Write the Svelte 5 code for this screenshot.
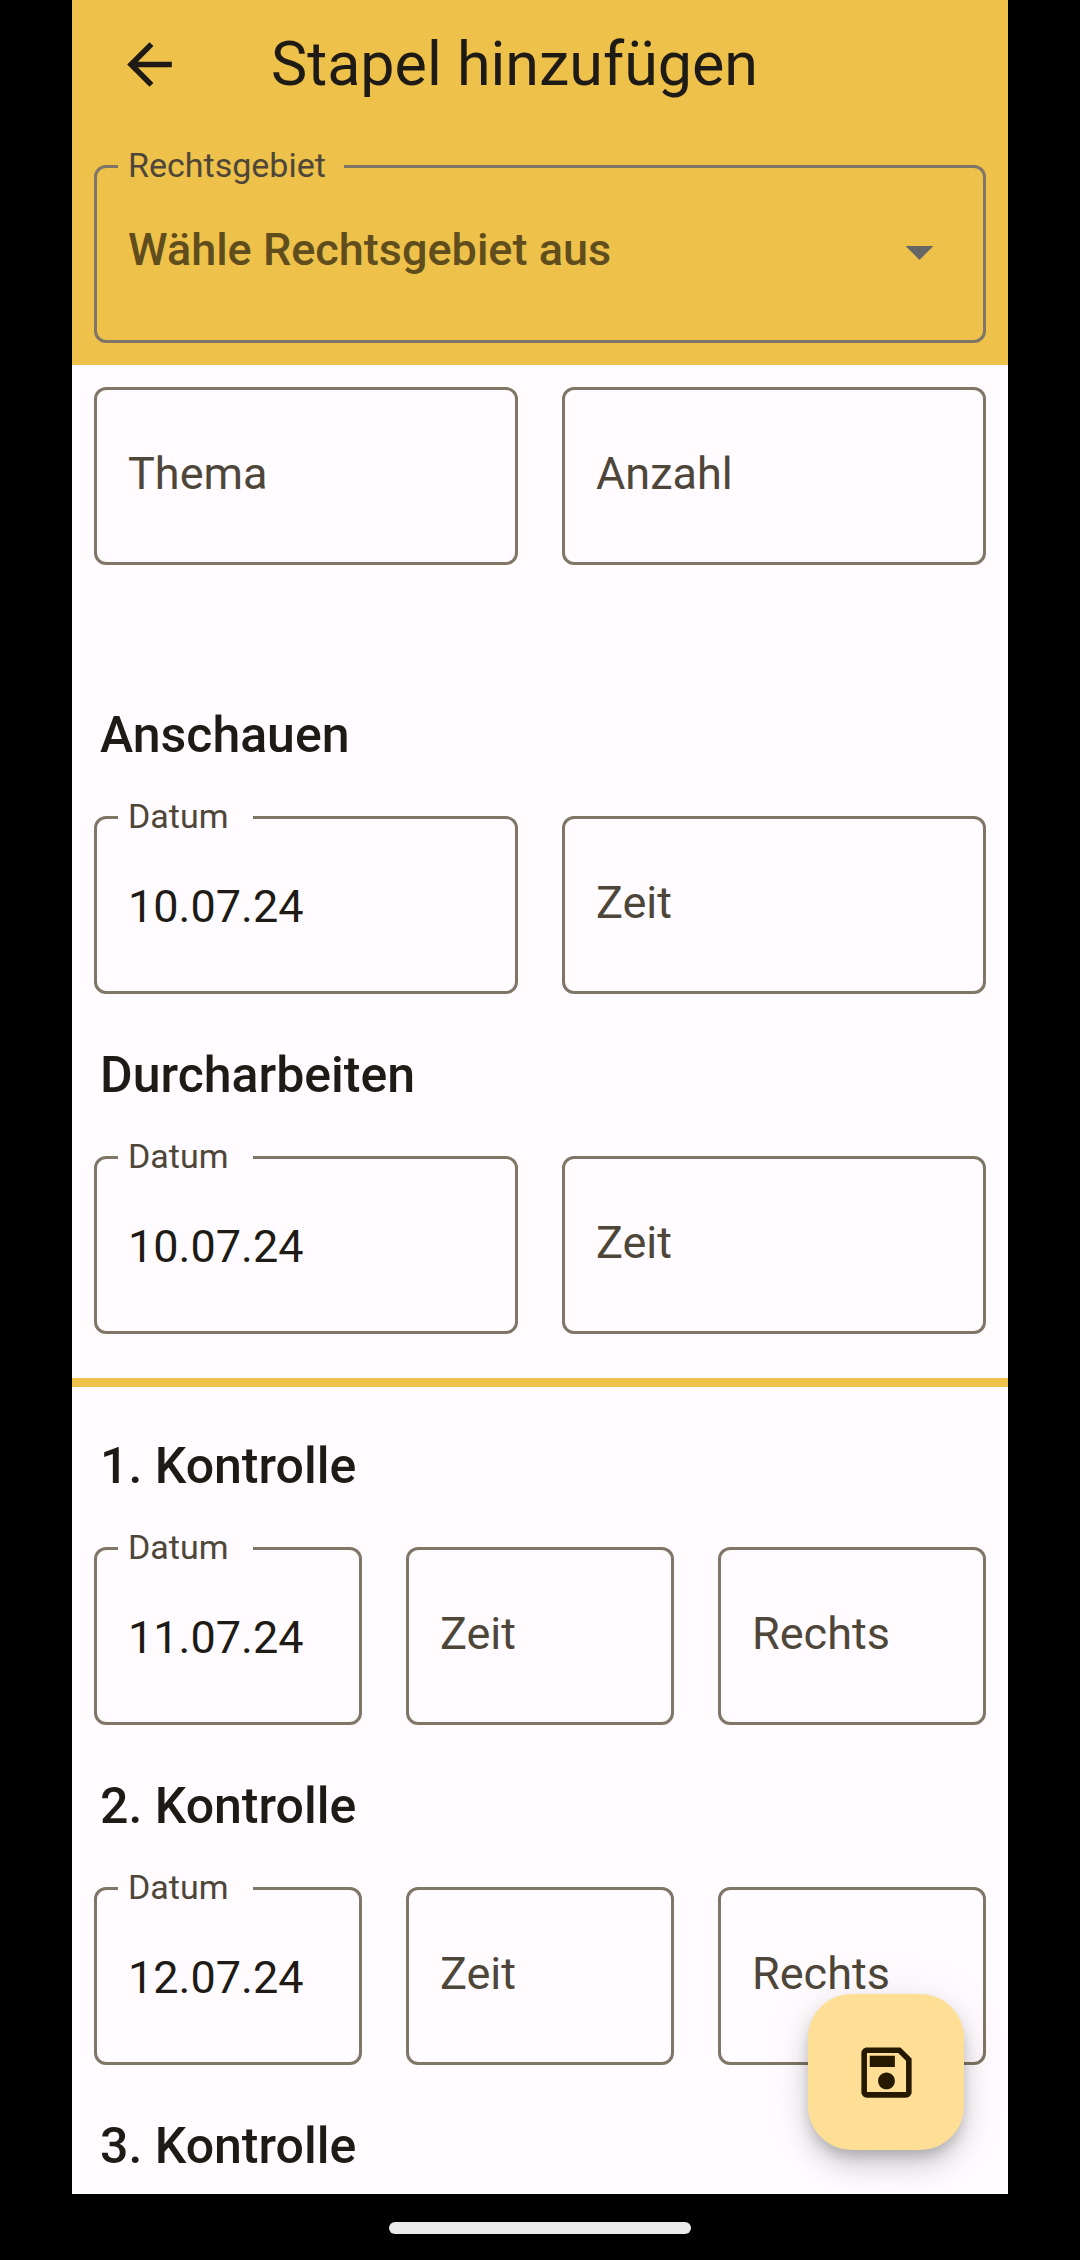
<script>
  const areas = ['Zivilrecht', 'Strafrecht', 'Öffentliches Recht'];

  let area = $state('');

  const topic = [
    { id: 'thema', label: 'Thema', value: '' },
    { id: 'anzahl', label: 'Anzahl', value: '' }
  ];

  const study = [
    {
      title: 'Anschauen',
      fields: [
        { id: 'anschauen-datum', label: 'Datum', value: '10.07.24' },
        { id: 'anschauen-zeit', label: 'Zeit', value: '' }
      ]
    },
    {
      title: 'Durcharbeiten',
      fields: [
        { id: 'durcharbeiten-datum', label: 'Datum', value: '10.07.24' },
        { id: 'durcharbeiten-zeit', label: 'Zeit', value: '' }
      ]
    }
  ];

  const checks = [
    {
      title: '1. Kontrolle',
      fields: [
        { id: 'k1-datum', label: 'Datum', value: '11.07.24' },
        { id: 'k1-zeit', label: 'Zeit', value: '' },
        { id: 'k1-rechts', label: 'Rechts', value: '' }
      ]
    },
    {
      title: '2. Kontrolle',
      fields: [
        { id: 'k2-datum', label: 'Datum', value: '12.07.24' },
        { id: 'k2-zeit', label: 'Zeit', value: '' },
        { id: 'k2-rechts', label: 'Rechts', value: '' }
      ]
    },
    { title: '3. Kontrolle', fields: [] }
  ];
</script>

{#snippet row(fields)}
  <div class="row">
    {#each fields as field (field.id)}
      <div class="field" class:filled={field.value}>
        <input id={field.id} type="text" value={field.value} />
        <label for={field.id}>{field.label}</label>
      </div>
    {/each}
  </div>
{/snippet}

{#snippet group(item)}
  <section>
    <h2>{item.title}</h2>
    {#if item.fields.length}
      {@render row(item.fields)}
    {/if}
  </section>
{/snippet}

<div class="screen">
  <header>
    <div class="bar">
      <button class="back" type="button" aria-label="Zurück">
        <svg viewBox="0 0 24 24" aria-hidden="true">
          <path d="M20 11H7.83l5.59-5.59L12 4l-8 8 8 8 1.41-1.41L7.83 13H20v-2z" />
        </svg>
      </button>
      <h1>Stapel hinzufügen</h1>
    </div>
    <div class="field filled picker">
      <select id="rechtsgebiet" bind:value={area}>
        <option value="">Wähle Rechtsgebiet aus</option>
        {#each areas as name}
          <option value={name}>{name}</option>
        {/each}
      </select>
      <label for="rechtsgebiet">Rechtsgebiet</label>
      <svg class="caret" viewBox="0 0 24 24" aria-hidden="true">
        <path d="M7 10l5 5 5-5z" />
      </svg>
    </div>
  </header>

  <main>
    <div class="topic">
      {@render row(topic)}
    </div>
    {#each study as item}
      {@render group(item)}
    {/each}
    <hr />
    {#each checks as item}
      {@render group(item)}
    {/each}

    <button class="fab" type="button" aria-label="Speichern">
      <svg viewBox="0 0 24 24" aria-hidden="true">
        <path
          d="M17 3H5c-1.11 0-2 .9-2 2v14c0 1.1.89 2 2 2h14c1.1 0 2-.9 2-2V7l-4-4zm2 16H5V5h11.17L19 7.83V19zm-7-7c-1.66 0-3 1.34-3 3s1.34 3 3 3 3-1.34 3-3-1.34-3-3-3zM6 6h9v4H6V6z"
        />
      </svg>
    </button>
  </main>

  <footer><div class="handle"></div></footer>
</div>

<style>
  :global(body) {
    margin: 0;
    background: #000;
  }

  .screen {
    --surface: #fffbff;
    --accent: #eec14a;
    --ink: #1e1b16;
    --muted: #4d4639;
    --outline: #7f7667;
    display: flex;
    flex-direction: column;
    box-sizing: border-box;
    min-height: 100vh;
    padding: 0 72px;
    background: #000;
    color: var(--ink);
    font-family: Roboto, 'Liberation Sans', sans-serif;
  }

  header {
    --surface: var(--accent);
    padding: 0 22px 22px;
    background: var(--accent);
  }

  .bar {
    display: flex;
    align-items: center;
    gap: 88px;
    height: 129px;
    margin-bottom: 36px;
    padding-left: 22px;
  }

  h1 {
    margin: 0;
    padding-bottom: 2px;
    font-size: 61px;
    font-weight: 400;
    line-height: 80px;
  }

  button {
    padding: 0;
    border: 0;
    background: none;
    color: inherit;
  }

  svg {
    display: block;
    width: 67px;
    height: 67px;
    fill: currentColor;
  }

  main {
    position: relative;
    flex: 1;
    padding: 22px 22px 18px;
    background: #fffbff;
  }

  .topic {
    margin-bottom: 140px;
  }

  section {
    margin-bottom: 51px;
  }

  section:last-of-type {
    margin-bottom: 0;
  }

  h2 {
    margin: 0 0 51px;
    padding-left: 6px;
    font-size: 50px;
    font-weight: 500;
    line-height: 60px;
  }

  section:last-of-type h2 {
    margin-bottom: 0;
  }

  hr {
    height: 9px;
    margin: -7px -22px 49px;
    border: 0;
    background: var(--accent);
  }

  .row {
    display: grid;
    grid-auto-flow: column;
    grid-auto-columns: minmax(0, 1fr);
    gap: 44px;
  }

  .field {
    position: relative;
    display: grid;
    align-items: center;
  }

  .field > * {
    grid-area: 1 / 1;
  }

  input,
  select {
    box-sizing: border-box;
    width: 100%;
    height: 178px;
    margin: 0;
    padding: 2px 31px 0;
    border: 3px solid var(--outline);
    border-radius: 12px;
    outline: 0;
    background: transparent;
    color: var(--ink);
    font: 400 45px/60px Roboto, 'Liberation Sans', sans-serif;
    appearance: none;
  }

  select {
    padding: 0 100px 8px 31px;
    color: #5f4d1d;
    font-weight: 500;
  }

  label {
    padding: 0 0 4px 34px;
    color: var(--muted);
    font-size: 45px;
    line-height: 60px;
    pointer-events: none;
  }

  .filled label {
    position: absolute;
    top: -20px;
    left: 24px;
    box-sizing: border-box;
    min-width: 135px;
    padding: 0 18px 0 10px;
    background: var(--surface);
    font-size: 34px;
    line-height: 40px;
  }

  .caret {
    justify-self: end;
    margin: 0 33px 6px 0;
    color: #666;
    pointer-events: none;
  }

  .fab {
    position: absolute;
    right: 44px;
    bottom: 44px;
    display: grid;
    place-items: center;
    width: 156px;
    height: 156px;
    border-radius: 44px;
    background: #ffdf96;
    color: #251a00;
    box-shadow:
      0 8px 14px -3px rgb(0 0 0 / 20%),
      0 17px 28px rgb(0 0 0 / 14%),
      0 3px 50px rgb(0 0 0 / 8%);
  }

  footer {
    display: grid;
    place-items: center;
    height: 67px;
  }

  .handle {
    width: 302px;
    height: 12px;
    border-radius: 6px;
    background: #ebebeb;
  }
</style>
